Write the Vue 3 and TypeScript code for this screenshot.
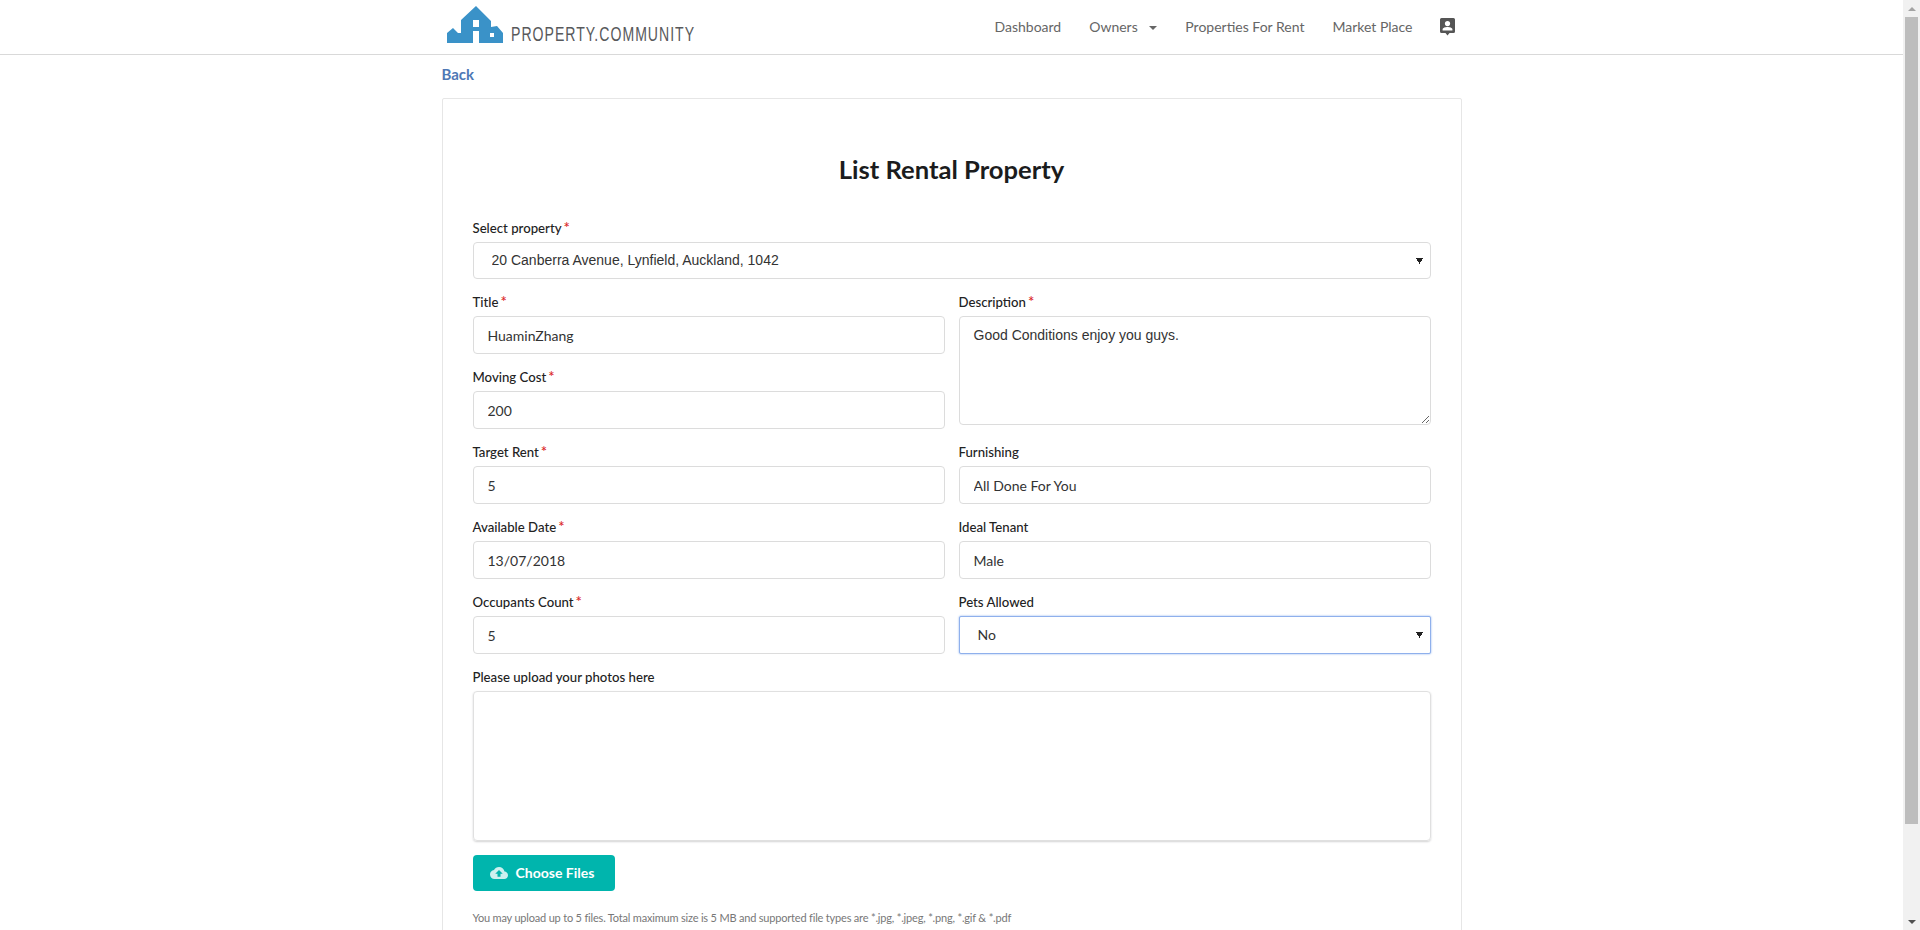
<script setup lang="ts">
import { reactive } from 'vue'

const navItems = ['Dashboard', 'Owners', 'Properties For Rent', 'Market Place']

const form = reactive({
  property: '20 Canberra Avenue, Lynfield, Auckland, 1042',
  title: 'HuaminZhang',
  description: 'Good Conditions enjoy you guys.',
  movingCost: '200',
  targetRent: '5',
  furnishing: 'All Done For You',
  availableDate: '13/07/2018',
  idealTenant: 'Male',
  occupants: '5',
  pets: 'No',
})
</script>

<template>
  <div class="page">
    <div class="viewport">
      <header class="navbar">
        <div class="navbar-inner">
          <a class="brand" href="#">
            <svg class="brand-mark" width="57" height="38" viewBox="0 0 57 38">
              <path
                fill="#3a92c8"
                fill-rule="evenodd"
                d="M29 0 L44 15 L44 21 L50 20 L56 27 L56 37 L0 37 L0 27 L6 22 L11 27 L14 27 L14 14 Z M26 14 V21 H32 V14 Z M26 25 V37 H32 V25 Z M43 27 V31 H47 V27 Z"
              />
            </svg>
            <span class="brand-text">PROPERTY.COMMUNITY</span>
          </a>
          <nav class="nav">
            <a v-for="item in navItems" :key="item" class="nav-link" href="#">
              {{ item }}
              <i v-if="item === 'Owners'" class="caret"></i>
            </a>
            <a class="nav-icon" href="#">
              <svg width="15" height="18" viewBox="0 0 15 18">
                <path fill="#555" d="M1.5 0 H13.5 A1.5 1.5 0 0 1 15 1.5 V13.5 A1.5 1.5 0 0 1 13.5 15 H9.5 L7.5 17.5 L5.5 15 H1.5 A1.5 1.5 0 0 1 0 13.5 V1.5 A1.5 1.5 0 0 1 1.5 0 Z" />
                <circle cx="7.5" cy="5.6" r="2.6" fill="#fff" />
                <path fill="#fff" d="M2.6 12.6 V11.4 C2.6 9.8 5.6 9 7.5 9 S12.4 9.8 12.4 11.4 V12.6 Z" />
              </svg>
            </a>
          </nav>
        </div>
      </header>

      <main class="container">
        <a class="back" href="#">Back</a>

        <section class="card">
          <h2 class="card-title">List Rental Property</h2>

          <form class="form" @submit.prevent>
            <div class="field full">
              <label>Select property<span class="req">*</span></label>
              <select v-model="form.property" class="select arial">
                <option>20 Canberra Avenue, Lynfield, Auckland, 1042</option>
              </select>
            </div>

            <div class="field">
              <label>Title<span class="req">*</span></label>
              <input v-model="form.title" type="text" />
            </div>
            <div class="field span-2">
              <label>Description<span class="req">*</span></label>
              <textarea v-model="form.description"></textarea>
            </div>
            <div class="field">
              <label>Moving Cost<span class="req">*</span></label>
              <input v-model="form.movingCost" type="text" />
            </div>

            <div class="field">
              <label>Target Rent<span class="req">*</span></label>
              <input v-model="form.targetRent" type="text" />
            </div>
            <div class="field">
              <label>Furnishing</label>
              <input v-model="form.furnishing" type="text" />
            </div>

            <div class="field">
              <label>Available Date<span class="req">*</span></label>
              <input v-model="form.availableDate" type="text" />
            </div>
            <div class="field">
              <label>Ideal Tenant</label>
              <input v-model="form.idealTenant" type="text" />
            </div>

            <div class="field">
              <label>Occupants Count<span class="req">*</span></label>
              <input v-model="form.occupants" type="text" />
            </div>
            <div class="field">
              <label>Pets Allowed</label>
              <select v-model="form.pets" class="select focused">
                <option>No</option>
                <option>Yes</option>
              </select>
            </div>

            <div class="field full">
              <label>Please upload your photos here</label>
              <div class="dropzone"></div>
            </div>
          </form>

          <button class="upload-btn" type="button">
            <svg width="18" height="18" viewBox="0 0 24 24">
              <path
                fill="#fff"
                fill-opacity="0.8"
                d="M19.35 10.04C18.67 6.59 15.64 4 12 4 9.11 4 6.6 5.64 5.35 8.04 2.34 8.36 0 10.91 0 14c0 3.31 2.69 6 6 6h13c2.76 0 5-2.24 5-5 0-2.64-2.05-4.78-4.65-4.96zM14 13v4h-4v-4H7l5-5 5 5h-3z"
              />
            </svg>
            Choose Files
          </button>

          <p class="hint">You may upload up to 5 files. Total maximum size is 5 MB and supported file types are *.jpg, *.jpeg, *.png, *.gif &amp; *.pdf</p>
        </section>
      </main>
    </div>

    <!-- the browser's own scrollbar is hidden in the photo, so it is drawn here -->
    <div class="scrollbar">
      <div class="scroll-btn"><i class="arrow-up"></i></div>
      <div class="scroll-thumb"></div>
      <div class="scroll-track"></div>
      <div class="scroll-btn"><i class="arrow-down"></i></div>
    </div>
  </div>
</template>

<style>
html,
body {
  margin: 0;
  background: #fff;
}
</style>

<style scoped>
.page {
  display: flex;
  height: 100vh;
  overflow: hidden;
  font-family: Lato, 'Helvetica Neue', Arial, sans-serif;
  font-size: 14px;
  color: #222;
}

.viewport {
  flex: 1;
  min-width: 0;
  overflow: hidden;
}

/* scrollbar */
.scrollbar {
  flex: 0 0 17px;
  display: flex;
  flex-direction: column;
  background: #f1f1f1;
}

.scroll-btn {
  flex: 0 0 17px;
  display: flex;
  align-items: center;
  justify-content: center;
}

.scroll-thumb {
  flex: 0 0 807px;
  margin: 0 2px;
  background: #bdbdbd;
}

.scroll-track {
  flex: 1;
}

.arrow-up,
.arrow-down {
  width: 0;
  height: 0;
  border-left: 4px solid transparent;
  border-right: 4px solid transparent;
}

.arrow-up {
  border-bottom: 4px solid #a3a3a3;
}

.arrow-down {
  border-top: 4px solid #505050;
}

/* navbar */
.navbar {
  height: 55px;
  box-sizing: border-box;
  border-bottom: 1px solid #d9d9d9;
}

.navbar-inner {
  width: 1020px;
  height: 54px;
  margin: 0 auto;
  padding: 0 7px 0 5px;
  box-sizing: border-box;
  display: flex;
  align-items: center;
  justify-content: space-between;
}

.brand {
  align-self: flex-start;
  display: flex;
  align-items: flex-end;
  gap: 7px;
  height: 38px;
  margin-top: 6px;
  text-decoration: none;
}

.brand-mark {
  display: block;
}

.brand-text {
  display: block;
  width: 183px;
  margin-bottom: 1px;
  font-family: 'Liberation Sans', sans-serif;
  font-size: 21px;
  line-height: 19px;
  letter-spacing: 1.5px;
  white-space: nowrap;
  color: #58595b;
  transform: scaleX(0.67);
  transform-origin: left center;
}

.nav {
  display: flex;
  align-items: center;
  gap: 28px;
}

.nav-link {
  color: #666;
  text-decoration: none;
  line-height: 20px;
  white-space: nowrap;
}

.caret {
  display: inline-block;
  width: 0;
  height: 0;
  margin-left: 8px;
  vertical-align: middle;
  border-left: 4px solid transparent;
  border-right: 4px solid transparent;
  border-top: 4px solid #666;
}

.nav-icon {
  display: block;
  height: 18px;
  margin-left: -1px;
}

.nav-icon svg {
  display: block;
}

/* content */
.container {
  width: 1020px;
  margin: 0 auto;
}

.back {
  display: block;
  margin: 9px 0 14px;
  font-size: 15px;
  line-height: 20px;
  font-weight: 700;
  color: #4e78b5;
  text-decoration: none;
}

.card {
  box-sizing: border-box;
  height: 934px;
  padding: 27px 30px 0;
  border: 1px solid #e6e6e6;
  border-radius: 2px;
  overflow: hidden;
}

.card-title {
  margin: 29px 0 38px;
  font-size: 25.6px;
  line-height: 28px;
  font-weight: 700;
  text-align: center;
  color: #1b1c1d;
}

.form {
  display: grid;
  grid-template-columns: 472px 472px;
  column-gap: 14px;
  row-gap: 16px;
}

.field {
  display: flex;
  flex-direction: column;
  min-width: 0;
}

.full {
  grid-column: 1 / -1;
}

.span-2 {
  grid-row: span 2;
}

.field label {
  height: 15px;
  font-size: 13.2px;
  line-height: 15px;
  margin-bottom: 6px;
  font-weight: 500;
  color: #222;
}

.req {
  margin-left: 2px;
  font-size: 15px;
  line-height: 0;
  color: #db2828;
}

input,
textarea,
.select {
  box-sizing: border-box;
  width: 100%;
  font-family: Lato, sans-serif;
  font-size: 14px;
  color: #333;
  background-color: #fff;
  border: 1px solid #dcdcdc;
  border-radius: 4px;
  outline: none;
}

input {
  height: 38px;
  padding: 0 14px;
}

textarea {
  height: 109px;
  padding: 10px 14px;
  font-family: 'Liberation Sans', Arial, sans-serif;
  font-size: 14px;
  resize: vertical;
}

.select {
  appearance: none;
  height: 37px;
  padding: 0 18px 2px;
  background-image: conic-gradient(from -30deg at 50% 100%, #222 60deg, transparent 0);
  background-repeat: no-repeat;
  background-size: 7px 6px;
  background-position: right 7px center;
}

.arial {
  font-family: 'Liberation Sans', Arial, sans-serif;
}

.focused {
  border: 1px solid #8fb0ec;
  border-radius: 2px;
  box-shadow: 0 0 2px rgba(70, 130, 230, 0.7);
  height: 38px;
}

.dropzone {
  height: 150px;
  box-sizing: border-box;
  border: 1px solid #e0e0e0;
  border-radius: 4px;
  box-shadow: 0 1px 2px rgba(34, 36, 38, 0.2);
}

.upload-btn {
  display: flex;
  align-items: center;
  gap: 8px;
  width: 142px;
  height: 36px;
  margin-top: 14px;
  padding: 0 0 1px 17px;
  box-sizing: border-box;
  font-family: inherit;
  font-size: 14px;
  font-weight: 700;
  color: #fff;
  background: #00b5ad;
  border: none;
  border-radius: 4px;
}

.hint {
  margin: 19px 0 0;
  font-size: 11px;
  line-height: 16px;
  letter-spacing: -0.19px;
  color: #777;
}
</style>
